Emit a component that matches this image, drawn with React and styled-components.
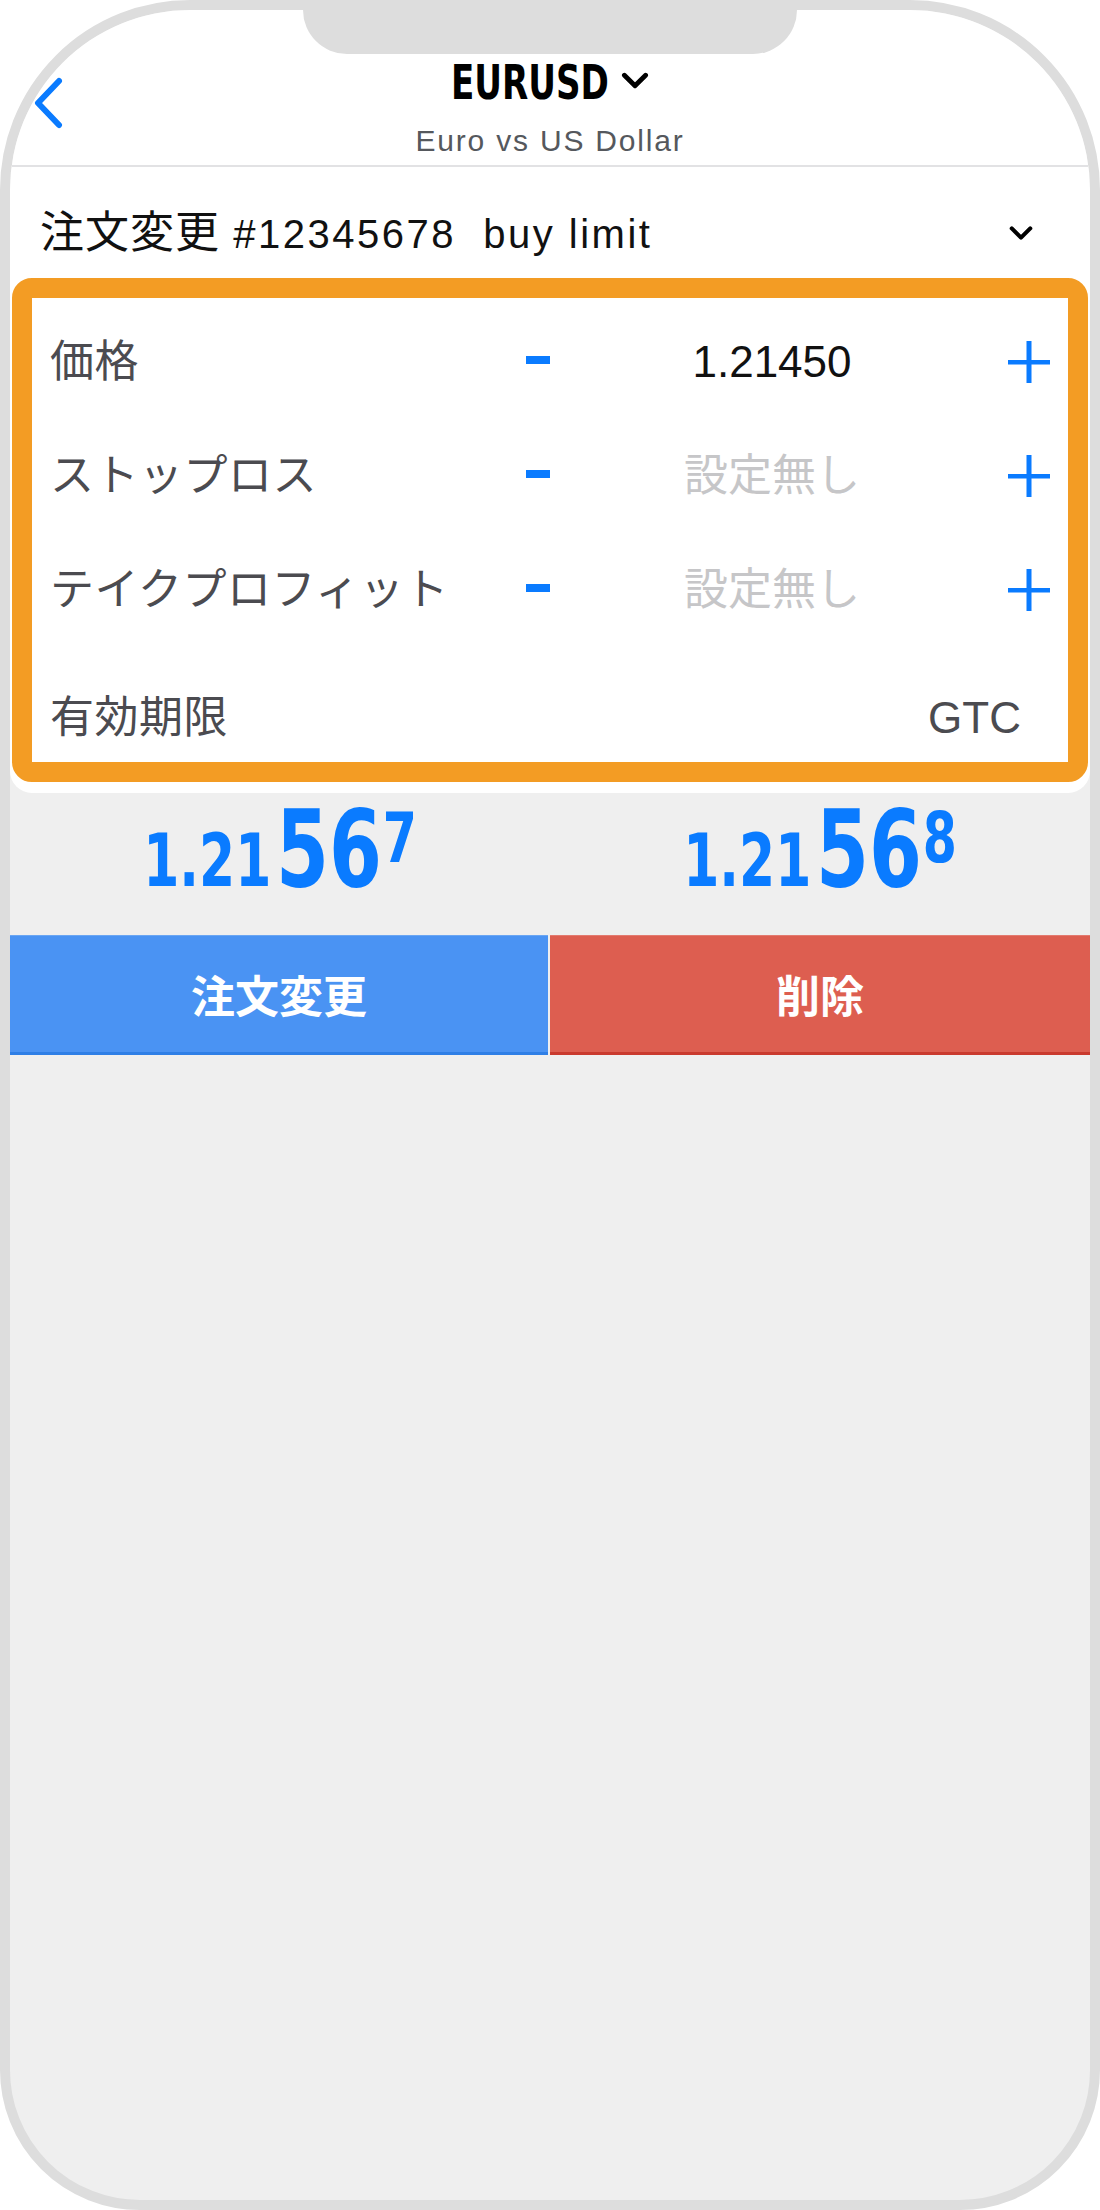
import styled, { createGlobalStyle } from "styled-components";

const colors = {
  frame: "#dddddd",
  screen: "#efefef",
  blue: "#0a7bff",
  orange: "#f39c24",
  label: "#4b4b50",
  muted: "#c6c6c8",
  buy: "#4a93f3",
  sell: "#dd5e50",
};

const condensed = `"DejaVu Sans Condensed", "DejaVu Sans", sans-serif`;
const sans = `"Liberation Sans", "Noto Sans CJK JP", sans-serif`;

const GlobalStyle = createGlobalStyle`
  * { box-sizing: border-box; }
  html, body {
    margin: 0;
    padding: 0;
    background: #ffffff;
    font-family: ${sans};
  }
`;

const rows = [
  { label: "価格", value: "1.21450", set: true },
  { label: "ストップロス", value: "設定無し", set: false },
  { label: "テイクプロフィット", value: "設定無し", set: false },
];

function Chevron({ width, height, stroke }) {
  return (
    <svg width={width} height={height} viewBox="0 0 26 16" fill="none">
      <polyline
        points="3,3 13,13 23,3"
        stroke="#000"
        strokeWidth={stroke}
        strokeLinecap="round"
        strokeLinejoin="round"
      />
    </svg>
  );
}

function Plus() {
  return (
    <svg width="42" height="42" viewBox="0 0 42 42">
      <rect x="18.5" y="0" width="5" height="42" fill={colors.blue} />
      <rect x="0" y="19" width="42" height="4.5" fill={colors.blue} />
    </svg>
  );
}

function Price({ head, big, tail }) {
  return (
    <PriceText>
      <Small>{head}</Small>
      <Big>{big}</Big>
      <Sup>{tail}</Sup>
    </PriceText>
  );
}

export default function App() {
  return (
    <>
      <GlobalStyle />
      <Phone>
        <Notch />
        <TopPanel>
          <Header>
            <Back>
              <svg width="30" height="52" viewBox="0 0 30 52" fill="none">
                <polyline
                  points="26,4 5,26 26,48"
                  stroke={colors.blue}
                  strokeWidth="6"
                  strokeLinecap="round"
                  strokeLinejoin="round"
                />
              </svg>
            </Back>
            <TitleBlock>
              <Title>
                <Symbol>EURUSD</Symbol>
                <Chevron width={28} height={17} stroke={4.5} />
              </Title>
              <Subtitle>Euro vs US Dollar</Subtitle>
            </TitleBlock>
          </Header>
          <OrderRow>
            <OrderTitle>
              注文変更 <Latin>#12345678&nbsp;&nbsp;buy limit</Latin>
            </OrderTitle>
            <Chevron width={24} height={16} stroke={4.5} />
          </OrderRow>
          <Form>
            {rows.map((row) => (
              <StepRow key={row.label}>
                <Label>{row.label}</Label>
                <Minus />
                <Value set={row.set}>{row.value}</Value>
                <PlusCell>
                  <Plus />
                </PlusCell>
              </StepRow>
            ))}
            <ExpiryRow>
              <Label>有効期限</Label>
              <Expiry>GTC</Expiry>
            </ExpiryRow>
          </Form>
        </TopPanel>
        <Prices>
          <Price head="1.21" big="56" tail="7" />
          <Price head="1.21" big="56" tail="8" />
        </Prices>
        <Buttons>
          <ActionButton tone="buy">注文変更</ActionButton>
          <ActionButton tone="sell">削除</ActionButton>
        </Buttons>
      </Phone>
    </>
  );
}

const Phone = styled.div`
  position: relative;
  width: 1100px;
  height: 2210px;
  border: 10px solid ${colors.frame};
  border-radius: 190px 190px 140px 140px;
  background: ${colors.screen};
  overflow: hidden;
  display: flex;
  flex-direction: column;
`;

const Notch = styled.div`
  position: absolute;
  top: 0;
  left: 293px;
  width: 494px;
  height: 44px;
  background: ${colors.frame};
  border-radius: 0 0 48px 48px;
  z-index: 2;
`;

const TopPanel = styled.div`
  background: #ffffff;
  border-radius: 0 0 22px 22px;
  padding: 0 2px 11px;
`;

const Header = styled.div`
  position: relative;
  height: 157px;
  border-bottom: 2px solid #e2e2e4;
  display: flex;
  justify-content: center;
`;

const Back = styled.div`
  position: absolute;
  left: 21px;
  top: 67px;
  display: flex;
`;

const TitleBlock = styled.div`
  display: flex;
  flex-direction: column;
  align-items: center;
  padding-top: 48px;
`;

const Title = styled.div`
  display: flex;
  align-items: center;
  gap: 12px;
  font-family: ${condensed};
  font-weight: 700;
  font-size: 48px;
  line-height: 1;
  color: #000;
  svg {
    margin-top: -4px;
  }
`;

/* the app uses a narrow display face; squeeze the installed condensed one to its width */
const Symbol = styled.span`
  display: inline-block;
  transform: scaleX(0.79);
  transform-origin: right center;
  margin-left: -42px;
`;

const Subtitle = styled.div`
  margin-top: 20px;
  font-size: 30px;
  line-height: 1;
  letter-spacing: 1.8px;
  color: #55585d;
`;

const OrderRow = styled.div`
  height: 111px;
  padding: 20px 55px 0 28px;
  display: flex;
  align-items: center;
  justify-content: space-between;
`;

const OrderTitle = styled.div`
  font-size: 44px;
  line-height: 1;
  letter-spacing: 1px;
  color: #111;
`;

const Latin = styled.span`
  font-size: 40px;
  letter-spacing: 2.5px;
`;

const Form = styled.div`
  border: 20px solid ${colors.orange};
  border-radius: 20px;
  background: #ffffff;
  padding: 7px 18px 0;
`;

const StepRow = styled.div`
  height: 114px;
  display: grid;
  grid-template-columns: 1fr 60px 408px 74px;
  align-items: center;
`;

const Label = styled.div`
  font-size: 44px;
  line-height: 1;
  letter-spacing: 0.5px;
  color: ${colors.label};
  white-space: nowrap;
`;

const Minus = styled.div`
  justify-self: center;
  width: 24px;
  height: 8px;
  background: ${colors.blue};
  margin-top: -4px;
`;

const Value = styled.div`
  text-align: center;
  font-size: 44px;
  line-height: 1;
  color: ${(props) => (props.set ? "#111111" : colors.muted)};
`;

const PlusCell = styled.div`
  display: flex;
  justify-content: flex-end;
`;

const ExpiryRow = styled.div`
  height: 115px;
  display: flex;
  align-items: flex-end;
  justify-content: space-between;
  padding: 0 29px 22px 0;
`;

const Expiry = styled.div`
  font-size: 44px;
  line-height: 1;
  color: ${colors.label};
`;

const Prices = styled.div`
  height: 142px;
  display: grid;
  grid-template-columns: 1fr 1fr;
  padding-top: 3px;
`;

const PriceText = styled.div`
  display: flex;
  align-items: baseline;
  justify-content: center;
  font-family: ${condensed};
  font-weight: 700;
  line-height: 1;
  color: ${colors.blue};
  transform: scaleX(0.79);
`;

const Small = styled.span`
  font-size: 73px;
`;

const Big = styled.span`
  font-size: 107px;
  margin-left: 6px;
`;

const Sup = styled.span`
  align-self: flex-start;
  font-size: 69px;
  margin: 8px 0 0 1px;
`;

const Buttons = styled.div`
  height: 120px;
  display: grid;
  grid-template-columns: 538px 1fr;
  gap: 2px;
`;

const ActionButton = styled.div`
  display: flex;
  align-items: center;
  justify-content: center;
  background: ${(props) => (props.tone === "buy" ? colors.buy : colors.sell)};
  border-top: 1px solid
    ${(props) => (props.tone === "buy" ? "#6aa6f3" : "#e37a6f")};
  border-bottom: 3px solid
    ${(props) => (props.tone === "buy" ? "#2f7fe6" : "#c93a2e")};
  color: #ffffff;
  font-family: "Noto Sans CJK JP", sans-serif;
  font-weight: 700;
  font-size: 44px;
  line-height: 1;
`;
